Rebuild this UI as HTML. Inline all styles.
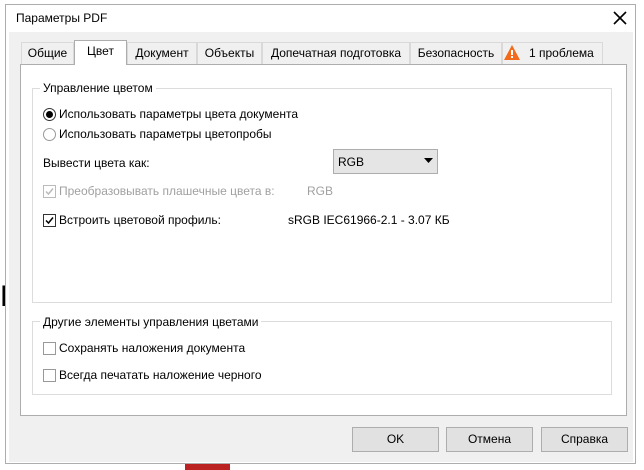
<!DOCTYPE html>
<html><head><meta charset="utf-8"><style>
*{margin:0;padding:0;box-sizing:border-box}
body{width:644px;height:470px;background:#fff;position:relative;overflow:hidden;font-family:"Liberation Sans","Noto Sans CJK SC",sans-serif;font-size:12px;color:#000}
.a{position:absolute}
.dlg{left:5px;top:4px;width:631px;height:460px;border:1px solid #adadad;background:#fff}
.client{left:9px;top:32px;width:624px;height:430px;background:#f0f0f0}
.tab{position:absolute;top:42px;height:22px;border:1px solid #d9d9d9;border-bottom:none;background:#f0f0f0;text-align:center;line-height:20px;white-space:nowrap}
.panel{left:20px;top:64px;width:607px;height:352px;background:#fff;border:1px solid #adadad}
.grp{position:absolute;border:1px solid #dcdcdc}
.lbl{position:absolute;background:#fff;padding:0 3px;white-space:nowrap}
.t{position:absolute;white-space:nowrap}
.cb{position:absolute;width:13px;height:13px;border:1px solid #333;background:#fff}
.btn{position:absolute;top:427px;height:25px;border:1px solid #adadad;background:#e1e1e1;text-align:center;line-height:23px}
</style></head><body>
<div class="a" style="left:0;top:282px;font-size:30px;line-height:30px;">F</div>
<div class="a" style="left:185px;top:464px;width:45px;height:6px;background:#b22;"></div>
<div class="a dlg"></div>
<div class="t" style="left:16px;top:11px">Параметры PDF</div>
<svg class="a" style="left:613px;top:11px" width="14" height="14"><path d="M1 1L13 13M13 1L1 13" stroke="#000" stroke-width="1.6"/></svg>
<div class="a client"></div>
<div class="tab" style="left:21px;width:53px">Общие</div>
<div class="tab" style="left:127px;width:70px">Документ</div>
<div class="tab" style="left:197px;width:65px">Объекты</div>
<div class="tab" style="left:262px;width:148px">Допечатная подготовка</div>
<div class="tab" style="left:410px;width:92px">Безопасность</div>
<div class="tab" style="left:502px;width:101px;text-align:left;padding-left:26px">1 проблема</div>
<svg class="a" style="left:504px;top:45px" width="16" height="15"><path d="M8 0L16 15H0Z" fill="#f26b1d"/><rect x="7" y="5" width="2" height="5" fill="#fff"/><rect x="7" y="11" width="2" height="2" fill="#fff"/></svg>
<div class="a panel"></div>
<div class="tab" style="left:74px;width:53px;top:40px;height:25px;background:#fff;border-color:#adadad">Цвет</div>
<div class="grp" style="left:32px;top:88px;width:580px;height:215px"></div>
<div class="lbl" style="left:40px;top:81px">Управление цветом</div>
<div class="grp" style="left:32px;top:321px;width:580px;height:74px"></div>
<div class="lbl" style="left:40px;top:315px">Другие элементы управления цветами</div>
<div class="a" style="left:43px;top:108px;width:13px;height:13px;border:1px solid #333;border-radius:50%;background:#fff"></div>
<div class="a" style="left:46px;top:111px;width:7px;height:7px;border-radius:50%;background:#000"></div>
<div class="t" style="left:59px;top:107px">Использовать параметры цвета документа</div>
<div class="a" style="left:43px;top:128px;width:13px;height:13px;border:1px solid #999;border-radius:50%;background:#fff"></div>
<div class="t" style="left:59px;top:127px">Использовать параметры цветопробы</div>
<div class="t" style="left:43px;top:156px">Вывести цвета как:</div>
<div class="a" style="left:333px;top:149px;width:105px;height:25px;border:1px solid #adadad;background:#e5e5e5"></div>
<div class="t" style="left:338px;top:155px">RGB</div>
<svg class="a" style="left:424px;top:158px" width="10" height="6"><path d="M0 0H9L4.5 5Z" fill="#000"/></svg>
<div class="cb" style="left:43px;top:185px;border-color:#bbb"></div>
<svg class="a" style="left:44px;top:186px" width="11" height="11"><path d="M2 5.5L4.5 8L9 2.5" stroke="#bbb" stroke-width="1.5" fill="none"/></svg>
<div class="t" style="left:59px;top:184px;color:#a0a0a0">Преобразовывать плашечные цвета в:</div>
<div class="t" style="left:307px;top:184px;color:#a0a0a0">RGB</div>
<div class="cb" style="left:43px;top:214px"></div>
<svg class="a" style="left:44px;top:215px" width="11" height="11"><path d="M2 5.5L4.5 8L9 2.5" stroke="#000" stroke-width="1.5" fill="none"/></svg>
<div class="t" style="left:59px;top:213px">Встроить цветовой профиль:</div>
<div class="t" style="left:288px;top:213px">sRGB IEC61966-2.1 - 3.07 КБ</div>
<div class="cb" style="left:43px;top:342px;border-color:#999"></div>
<div class="t" style="left:59px;top:341px">Сохранять наложения документа</div>
<div class="cb" style="left:43px;top:369px;border-color:#999"></div>
<div class="t" style="left:59px;top:368px">Всегда печатать наложение черного</div>
<div class="btn" style="left:352px;width:87px">OK</div>
<div class="btn" style="left:446px;width:87px">Отмена</div>
<div class="btn" style="left:541px;width:87px">Справка</div>
</body></html>
